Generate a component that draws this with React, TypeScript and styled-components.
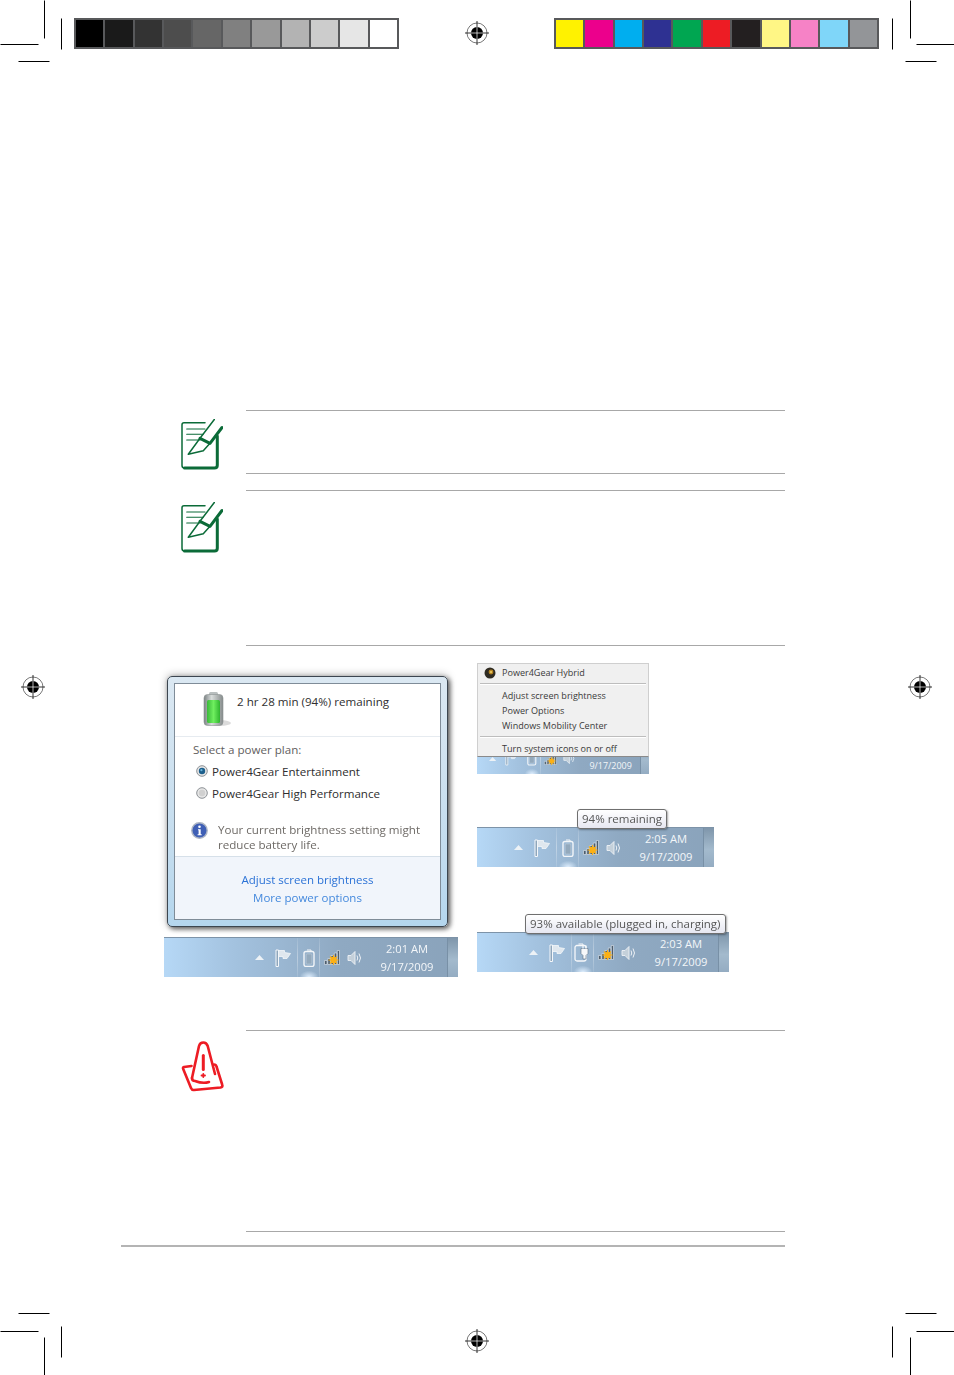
import React from "react";
import styled, { createGlobalStyle } from "styled-components";

const GRAYS = ["#000000", "#1a1a1a", "#333333", "#4d4d4d", "#666666", "#808080", "#999999", "#b3b3b3", "#cccccc", "#e6e6e6", "#ffffff"];
const COLORS = ["#fff200", "#ec008c", "#00aeef", "#2e3192", "#00a651", "#ed1c24", "#231f20", "#fff685", "#f682c6", "#7fd6f9", "#939598"];
const TARGETS = [[477, 33], [33, 687], [920, 687], [477, 1341]];
const CROPS = [
	"M44 0V38", "M61 18V49", "M0 44H38", "M18 61H49",
	"M910 0V38", "M892 18V49", "M916 44H954", "M905 61H936",
	"M44 1337V1375", "M61 1326V1357", "M0 1331H38", "M18 1313H49",
	"M910 1337V1375", "M892 1326V1357", "M916 1331H954", "M905 1313H936",
];

const GlobalStyle = createGlobalStyle`
	html, body {
		margin: 0;
		padding: 0;
		background: #fff;
	}
`;

const Page = styled.div`
	position: relative;
	width: 954px;
	height: 1375px;
	padding-top: 18px;
	box-sizing: border-box;
	overflow: hidden;
	background: #fff;
	font-family: "Open Sans", "Noto Sans", sans-serif;
`;

const PrintMarks = styled.svg`
	position: absolute;
	top: 0;
	left: 0;
`;

const SwatchRow = styled.div`
	display: flex;
	justify-content: space-between;
	margin: 0 75px 361px 74px;
`;

const SwatchBar = styled.div`
	display: grid;
	grid-template-columns: repeat(11, 1fr);
	gap: 2px;
	width: 325px;
	height: 31px;
	padding: 2px;
	box-sizing: border-box;
	background: #58595b;
`;

const Swatch = styled.div<{ $color: string }>`
	background: ${props => props.$color};
`;

const Content = styled.main`
	display: flex;
	flex-direction: column;
	width: 664px;
	margin-left: 121px;
`;

const Note = styled.section<{ $height: number; $iconTop: number; $gap: number }>`
	display: grid;
	grid-template-columns: 125px 539px;
	height: ${props => props.$height}px;
	margin-top: ${props => props.$gap}px;

	& > svg {
		margin: ${props => props.$iconTop}px 0 0 60px;
	}
`;

const NoteBody = styled.div`
	border-top: 1px solid #a8a8a8;
	border-bottom: 1px solid #a8a8a8;
`;

const Figures = styled.div`
	display: flex;
	gap: 19px;
	height: 314px;
	margin: 17px 0 0 43px;
	filter: blur(0.3px);
`;

const LeftFigure = styled.figure`
	display: flex;
	flex-direction: column;
	width: 294px;
	margin: 0;
`;

const Flyout = styled.div`
	width: 281px;
	height: 251px;
	margin: 13px 0 10px 3px;
	padding: 7px;
	box-sizing: border-box;
	border: 1px solid #3c4650;
	border-radius: 5px;
	background: linear-gradient(180deg, #dbe8f2, #c3dcee 70%, #b4d6ee);
	box-shadow: 2px 2px 5px rgba(0, 0, 0, 0.6), 0 -1px 9px rgba(0, 0, 0, 0.28);
`;

const FlyoutPanel = styled.div`
	display: flex;
	flex-direction: column;
	height: 100%;
	margin: -1px;
	border: 1px solid #7f8c98;
	background: #fff;
	color: #333;
	font-size: 11.6px;
`;

const FlyoutHeader = styled.div`
	display: flex;
	gap: 5px;
	height: 53px;
	padding: 8px 0 0 27px;
	box-sizing: border-box;
	border-bottom: 1px solid #e6ebf0;
	line-height: 20px;
	color: #303030;
`;

const PlanSection = styled.div`
	display: flex;
	flex: 1;
	flex-direction: column;
	padding: 5px 0 0 18px;
`;

const PlanTitle = styled.div`
	margin-bottom: 2px;
	line-height: 16px;
	color: #62605e;
`;

const PlanRow = styled.label`
	display: flex;
	align-items: center;
	gap: 4px;
	height: 22px;
	margin-left: 3px;
	color: #2e2e2e;
`;

const InfoRow = styled.div`
	display: flex;
	gap: 10px;
	margin-top: 18px;
	margin-left: -2px;
	line-height: 15px;
	color: #6e6a66;
`;

const LinkSection = styled.div`
	display: flex;
	flex-direction: column;
	align-items: center;
	height: 63px;
	padding-top: 14px;
	box-sizing: border-box;
	border-top: 1px solid #d6e0e9;
	background: #f1f5fb;
	font-size: 11.5px;
	line-height: 18px;
`;

const FlyoutLink = styled.a<{ $muted?: boolean }>`
	color: ${props => (props.$muted ? "#4489dd" : "#2b72d6")};
`;

const RightFigure = styled.div`
	display: flex;
	flex-direction: column;
`;

const MenuFigure = styled.figure`
	width: 172px;
	height: 111px;
	margin: 0 0 53px;
	overflow: hidden;
`;

const ContextMenu = styled.div`
	position: relative;
	z-index: 1;
	height: 94px;
	padding-top: 1px;
	box-sizing: border-box;
	width: 172px;
	border: 1px solid #cfcfcf;
	border-bottom-color: #8a8a8a;
	background: #f0f0f0;
	color: #3a3a3a;
	font-size: 9.05px;
`;

const MenuItem = styled.div`
	display: flex;
	align-items: center;
	gap: 6px;
	height: 15px;
	padding-left: 24px;
`;

const MenuTitle = styled(MenuItem)`
	padding-left: 6px;
`;

const MenuSeparator = styled.hr`
	height: 0;
	margin: 3px 2px;
	border: 0;
	border-top: 1px solid #bdbdbd;
	border-bottom: 1px solid #fff;
`;

const MenuStrip = styled.div`
	margin-top: -15px;
`;

const TrayFigure = styled.div<{ $gap?: number }>`
	position: relative;
	margin-bottom: ${props => props.$gap ?? 0}px;
`;

const Taskbar = styled.div<{ $width: number; $zoom?: number }>`
	display: flex;
	align-items: center;
	justify-content: flex-end;
	width: ${props => props.$width}px;
	height: 40px;
	box-sizing: border-box;
	zoom: ${props => props.$zoom ?? 1};
	border-top: 1px solid #7d93a8;
	background: linear-gradient(90deg, #b6d8f6 0, #a3c2df 24%, #8fa9c2 60%, #8aa3bb 100%);
`;

const TraySlot = styled.div<{ $width: number; $margin?: number; $glow?: boolean }>`
	position: relative;
	display: flex;
	align-items: center;
	justify-content: center;
	align-self: stretch;
	flex: none;
	width: ${props => props.$width}px;
	margin-left: ${props => props.$margin ?? 0}px;

	&::after {
		content: "";
		display: ${props => (props.$glow ? "block" : "none")};
		position: absolute;
		left: 50%;
		bottom: 0;
		width: 18px;
		height: 6px;
		margin-left: -9px;
		border-radius: 9px 9px 0 0;
		background: radial-gradient(ellipse at bottom, rgba(225, 240, 255, 0.95), rgba(225, 240, 255, 0) 75%);
	}
`;

const TrayDivider = styled.div`
	flex: none;
	align-self: stretch;
	width: 1px;
	background: linear-gradient(180deg, rgba(255, 255, 255, 0.08), rgba(255, 255, 255, 0.35) 50%, rgba(255, 255, 255, 0.1));
`;

const Clock = styled.div<{ $trail?: number }>`
	display: flex;
	flex: none;
	flex-direction: column;
	align-items: center;
	width: 52px;
	margin: 0 ${props => props.$trail ?? 11}px 0 18px;
	color: #f3f6f9;
	font-size: 11.2px;
	line-height: 18px;
	white-space: nowrap;
`;

const ShowDesktop = styled.div`
	flex: none;
	align-self: stretch;
	width: 11px;
	border-left: 1px solid #7890a6;
	box-sizing: border-box;
	background: linear-gradient(180deg, #7f96ab 0, #a3bacd 55%, #94acc2 100%);
`;

const Tooltip = styled.div<{ $left: number }>`
	position: absolute;
	top: -18px;
	left: ${props => props.$left}px;
	z-index: 2;
	height: 20px;
	padding: 0 4px;
	box-sizing: border-box;
	border: 1px solid #6f6f6f;
	border-radius: 3px;
	background: linear-gradient(180deg, #ffffff, #e6e7f1);
	box-shadow: 1px 1px 2px rgba(0, 0, 0, 0.35);
	color: #565656;
	font-size: 11.5px;
	line-height: 18px;
	white-space: nowrap;
`;

const FooterRule = styled.div`
	height: 2px;
	margin-top: 13px;
	background: #b4b4b4;
`;

const NoteIcon = () => (
	<svg width="42" height="51" viewBox="0 0 42 51" fill="none" stroke="#0b6b38" strokeLinecap="round" strokeLinejoin="round">
		<path d="M24 3.7H3Q1 3.7 1 5.7V46.5Q1 49 3.5 49" strokeWidth="1.5" />
		<path d="M3.5 49H33.5Q36.3 49 36.3 46.2V17" strokeWidth="3" />
		<path d="M5.7 10H24M5.7 15.3H22M5.7 21H19" strokeWidth="1.1" />
		<path d="M33.3 0.5L19 19.3L7.3 35.3L22.3 31.7L29 24.3" strokeWidth="1.5" />
		<path d="M19 19.3L29 24.3L41 8.5" strokeWidth="3" />
	</svg>
);

const WarningIcon = () => (
	<svg width="44" height="51" viewBox="0 0 44 51" fill="none" stroke="#ed1c24" strokeWidth="2.6" strokeLinecap="round" strokeLinejoin="round">
		<path d="M11 37L18 5Q19 1.5 22.3 1.5Q25.5 1.5 26.7 5L34 33" />
		<path d="M11 37Q11 40 14 40Q22 43 28 41" />
		<path d="M10.5 25L3 26Q1.5 26.5 2.2 28L10 47Q11 49.3 13 49L39.5 46.5Q42 46 41.3 44L35.5 25.5Q35 23.5 33 23.5" />
		<path d="M22.3 14.5V28.5" strokeWidth="3" />
		<path d="M20.5 34.5H24M22.3 33V36" strokeWidth="1.8" />
	</svg>
);

const BigBattery = () => (
	<svg width="30" height="36" viewBox="0 0 30 36">
		<defs>
			<linearGradient id="cell" x1="0" x2="1" y1="0" y2="0">
				<stop offset="0" stopColor="#7b8283" />
				<stop offset="0.4" stopColor="#d9dddc" />
				<stop offset="1" stopColor="#868c8c" />
			</linearGradient>
			<linearGradient id="charge" x1="0" x2="1" y1="0" y2="0">
				<stop offset="0" stopColor="#3ab93a" />
				<stop offset="0.5" stopColor="#6fef5f" />
				<stop offset="1" stopColor="#2fb52f" />
			</linearGradient>
		</defs>
		<ellipse cx="18" cy="31" rx="11" ry="3" fill="#000" opacity="0.14" />
		<rect x="7" y="0" width="9" height="4" rx="1.5" fill="#b9bfbf" />
		<rect x="2" y="2.5" width="19" height="31" rx="3.5" fill="url(#cell)" stroke="#8b9292" strokeWidth="0.6" />
		<rect x="5" y="8" width="13" height="23" rx="1.5" fill="url(#charge)" />
	</svg>
);

const Radio = ({ checked }: { checked?: boolean }) => (
	<svg width="12" height="12" viewBox="0 0 12 12">
		<circle cx="6" cy="6" r="5.3" fill="#e6e6e6" stroke="#8d9296" />
		<circle cx="6" cy="6" r="3.2" fill={checked ? "#1d5f8c" : "#d0d0d0"} />
		{checked && <circle cx="5.4" cy="5.2" r="1.1" fill="#68b4dc" />}
	</svg>
);

const InfoIcon = () => (
	<svg width="17" height="17" viewBox="0 0 17 17" style={{ flex: "none" }}>
		<circle cx="8.5" cy="8.5" r="7.7" fill="#3f5fb5" stroke="#aeb6c4" strokeWidth="1.4" />
		<circle cx="8.5" cy="4.7" r="1.3" fill="#fff" />
		<path d="M7 7.3H9.7V12.2H10.7V13.2H6.6V12.2H7.6V8.3H7Z" fill="#fff" />
	</svg>
);

const GearIcon = () => (
	<svg width="12" height="12" viewBox="0 0 12 12">
		<circle cx="6" cy="6" r="5.5" fill="#2f2b22" />
		<circle cx="7" cy="5" r="2.4" fill="#b5831f" />
		<circle cx="7" cy="5" r="1" fill="#f2d36b" />
	</svg>
);

const ChevronIcon = () => (
	<svg width="9" height="5" viewBox="0 0 9 5">
		<path d="M4.5 0L9 5H0Z" fill="#edf2f6" />
	</svg>
);

const FlagIcon = () => (
	<svg width="17" height="18" viewBox="0 0 17 18" fill="none" stroke="#f4f7fa">
		<path d="M1 1V17.5H3.5V1Z" fill="#8ea6bc" strokeWidth="1" />
		<path d="M3.5 1.5H9.5V3.5L15.5 4.5L12 9.5H8V7.5H3.5Z" fill="#dfe7ee" strokeWidth="0.8" />
	</svg>
);

const BatteryIcon = () => (
	<svg width="12" height="18" viewBox="0 0 12 18" fill="none" stroke="#f2f5f8">
		<path d="M4 1H8V2.5" strokeWidth="1" />
		<rect x="1" y="2.5" width="10" height="15" rx="2" strokeWidth="1.4" />
		<rect x="3.2" y="5" width="5.6" height="10" rx="1" fill="#93a9bc" stroke="#c4d1dc" strokeWidth="0.5" />
	</svg>
);

const PluggedIcon = () => (
	<svg width="17" height="19" viewBox="0 0 17 19" fill="none" stroke="#f6f8fa">
		<path d="M4.5 1H9V2.5" strokeWidth="1" />
		<rect x="1" y="2.5" width="11" height="15.5" rx="2" strokeWidth="1.3" />
		<path d="M7 5.5H14V10.5L12 12.5V16H9V12.5L7 10.5Z" fill="#f6f8fa" stroke="#5d7084" strokeWidth="0.6" />
		<path d="M9 2.5V5.5M12 2.5V5.5" strokeWidth="1.2" />
	</svg>
);

const SignalIcon = () => (
	<svg width="16" height="15" viewBox="0 0 16 15">
		<path d="M0.5 10.5H3V14.5H0.5ZM3.8 8.5H6.3V14.5H3.8ZM7 5.5H9.5V14.5H7ZM10.3 3H12.8V14.5H10.3ZM13.3 0.5H15.5V14.5H13.3Z" fill="#4d5d6c" stroke="#e6edf3" strokeWidth="0.6" />
		<circle cx="9.5" cy="10" r="3.2" fill="#fbb016" />
		<path d="M9.5 5V15M4.5 10H14.5M6 6.5L13 13.5M13 6.5L6 13.5" stroke="#fbb016" strokeWidth="1.1" />
	</svg>
);

const SpeakerIcon = () => (
	<svg width="16" height="16" viewBox="0 0 16 16" fill="none" stroke="#eef2f6">
		<path d="M1 5.5H4L8 1.5V14.5L4 10.5H1Z" fill="#c4d0da" stroke="#eef2f6" strokeWidth="0.9" />
		<path d="M10 5.5Q11.5 8 10 10.5" strokeWidth="1" />
		<path d="M12 3.5Q15 8 12 12.5" strokeWidth="1" />
	</svg>
);

type TrayProps = { width: number; time?: string; zoom?: number; plugged?: boolean; trail?: number };

const Tray = ({ width, time, zoom, plugged, trail }: TrayProps) => (
	<Taskbar $width={width} $zoom={zoom}>
		<TraySlot $width={9}>
			<ChevronIcon />
		</TraySlot>
		<TraySlot $width={17} $margin={11}>
			<FlagIcon />
		</TraySlot>
		<TraySlot $width={5} />
		<TrayDivider />
		<TraySlot $width={21} $glow>
			{plugged ? <PluggedIcon /> : <BatteryIcon />}
		</TraySlot>
		<TrayDivider />
		<TraySlot $width={16} $margin={4}>
			<SignalIcon />
		</TraySlot>
		<TraySlot $width={16} $margin={7}>
			<SpeakerIcon />
		</TraySlot>
		<Clock $trail={trail}>
			<span>{time ?? "\u00a0"}</span>
			<span>9/17/2009</span>
		</Clock>
		<ShowDesktop />
	</Taskbar>
);

const App = () => (
	<Page>
		<GlobalStyle />
		<SwatchRow>
			<SwatchBar>
				{GRAYS.map(color => (
					<Swatch key={color} $color={color} />
				))}
			</SwatchBar>
			<SwatchBar>
				{COLORS.map(color => (
					<Swatch key={color} $color={color} />
				))}
			</SwatchBar>
		</SwatchRow>

		<Content>
			<Note $height={64} $iconTop={9} $gap={0}>
				<NoteIcon />
				<NoteBody />
			</Note>
			<Note $height={156} $iconTop={12} $gap={16}>
				<NoteIcon />
				<NoteBody />
			</Note>

			<Figures>
				<LeftFigure>
					<Flyout>
						<FlyoutPanel>
							<FlyoutHeader>
								<BigBattery />
								<span>2 hr 28 min (94%) remaining</span>
							</FlyoutHeader>
							<PlanSection>
								<PlanTitle>Select a power plan:</PlanTitle>
								<PlanRow>
									<Radio checked />
									Power4Gear Entertainment
								</PlanRow>
								<PlanRow>
									<Radio />
									Power4Gear High Performance
								</PlanRow>
								<InfoRow>
									<InfoIcon />
									<span>
										Your current brightness setting might
										<br />
										reduce battery life.
									</span>
								</InfoRow>
							</PlanSection>
							<LinkSection>
								<FlyoutLink>Adjust screen brightness</FlyoutLink>
								<FlyoutLink $muted>More power options</FlyoutLink>
							</LinkSection>
						</FlyoutPanel>
					</Flyout>
					<Tray width={294} time="2:01 AM" trail={14} />
				</LeftFigure>

				<RightFigure>
					<MenuFigure>
						<ContextMenu>
							<MenuTitle>
								<GearIcon />
								Power4Gear Hybrid
							</MenuTitle>
							<MenuSeparator />
							<MenuItem>Adjust screen brightness</MenuItem>
							<MenuItem>Power Options</MenuItem>
							<MenuItem>Windows Mobility Center</MenuItem>
							<MenuSeparator />
							<MenuItem>Turn system icons on or off</MenuItem>
						</ContextMenu>
						<MenuStrip>
							<Tray width={215} zoom={0.8} />
						</MenuStrip>
					</MenuFigure>
					<TrayFigure $gap={65}>
						<Tooltip $left={100}>94% remaining</Tooltip>
						<Tray width={237} time="2:05 AM" />
					</TrayFigure>
					<TrayFigure>
						<Tooltip $left={48}>93% available (plugged in, charging)</Tooltip>
						<Tray width={252} time="2:03 AM" plugged />
					</TrayFigure>
				</RightFigure>
			</Figures>

			<Note $height={202} $iconTop={11} $gap={53}>
				<WarningIcon />
				<NoteBody />
			</Note>
			<FooterRule />
		</Content>

		<PrintMarks width="954" height="1375" viewBox="0 0 954 1375">
			<path d={CROPS.join("")} stroke="#000" strokeWidth="1" fill="none" transform="translate(0.5 0.5)" />
			{TARGETS.map(([x, y]) => (
				<g key={`${x}-${y}`} transform={`translate(${x} ${y})`}>
					<circle r="10" fill="none" stroke="#555" strokeWidth="0.8" />
					<circle r="6" fill="#000" />
					<path d="M-12 0H12M0 -12V12" stroke="#000" strokeWidth="0.8" />
					<path d="M-6 0H6M0 -6V6" stroke="#fff" strokeWidth="0.7" />
				</g>
			))}
		</PrintMarks>
	</Page>
);

export default App;
